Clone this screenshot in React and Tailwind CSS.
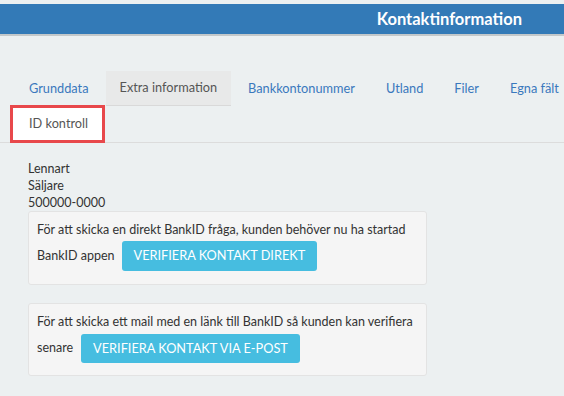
export default function App() {
  const tabs = ["Grunddata", "Extra information", "Bankkontonummer", "Utland", "Filer", "Egna fält"];

  return (
    <div className="min-h-[396px] w-[564px] overflow-hidden bg-[#ecf0f1] pt-1 font-['Lato',sans-serif] text-[12.5px] text-[#333]">
      {/* Header */}
      <div className="flex h-8 items-center justify-end border-b-2 border-[#c3c8ca] bg-[#337ab7] pr-[42px]">
        <h1 className="text-[16.5px] font-bold text-white">Kontaktinformation</h1>
      </div>

      {/* Tabs */}
      <div className="mt-[35px] border-b border-[#dcdcdc] text-[12.75px]">
        <div className="flex h-[35px] whitespace-nowrap pl-[15px]">
          {tabs.map((tab) => {
            const active = tab === "Extra information";
            return (
              <div
                key={tab}
                className={`mr-[3px] flex items-center px-[14px] ${
                  active ? "border-b border-[#d9d9d9] bg-[#e8e9e9] text-[#555]" : "text-[#3a78bd]"
                }`}
              >
                {tab}
              </div>
            );
          })}
        </div>
        <div className="flex h-[36px] items-end pl-[10px]">
          <div className="mb-[-1px] flex h-[38px] border-[3px] border-[#e8484b] bg-white">
            <div className="flex items-center pl-4 pr-[14px] text-[#555]">ID kontroll</div>
          </div>
        </div>
      </div>

      {/* Content */}
      <div className="px-[28px] pt-[17px]">
        <div className="leading-[17px]">
          <div>Lennart</div>
          <div>Säljare</div>
          <div>500000-0000</div>
        </div>

        <div className="w-[399px] rounded-[3px] border border-[#e3e3e3] bg-[#f5f5f5] px-2 pb-[13px] pt-[8px]">
          <div className="whitespace-nowrap leading-[20px]">
            För att skicka en direkt BankID fråga, kunden behöver nu ha startad
          </div>
          <div className="mt-[1px] flex items-center gap-[7px]">
            <span>BankID appen</span>
            <button className="h-[30px] rounded-[3px] bg-[#46bde0] px-3 text-[12.75px] text-white">
              VERIFIERA KONTAKT DIREKT
            </button>
          </div>
        </div>

        <div className="mt-[18px] w-[399px] rounded-[3px] border border-[#e3e3e3] bg-[#f5f5f5] px-2 pb-[12px] pt-[8px]">
          <div className="whitespace-nowrap leading-[20px]">
            För att skicka ett mail med en länk till BankID så kunden kan verifiera
          </div>
          <div className="mt-[2px] flex items-center gap-[8px]">
            <span>senare</span>
            <button className="h-[29px] rounded-[3px] bg-[#46bde0] px-3 text-[12.75px] text-white">
              VERIFIERA KONTAKT VIA E-POST
            </button>
          </div>
        </div>
      </div>
    </div>
  );
}
